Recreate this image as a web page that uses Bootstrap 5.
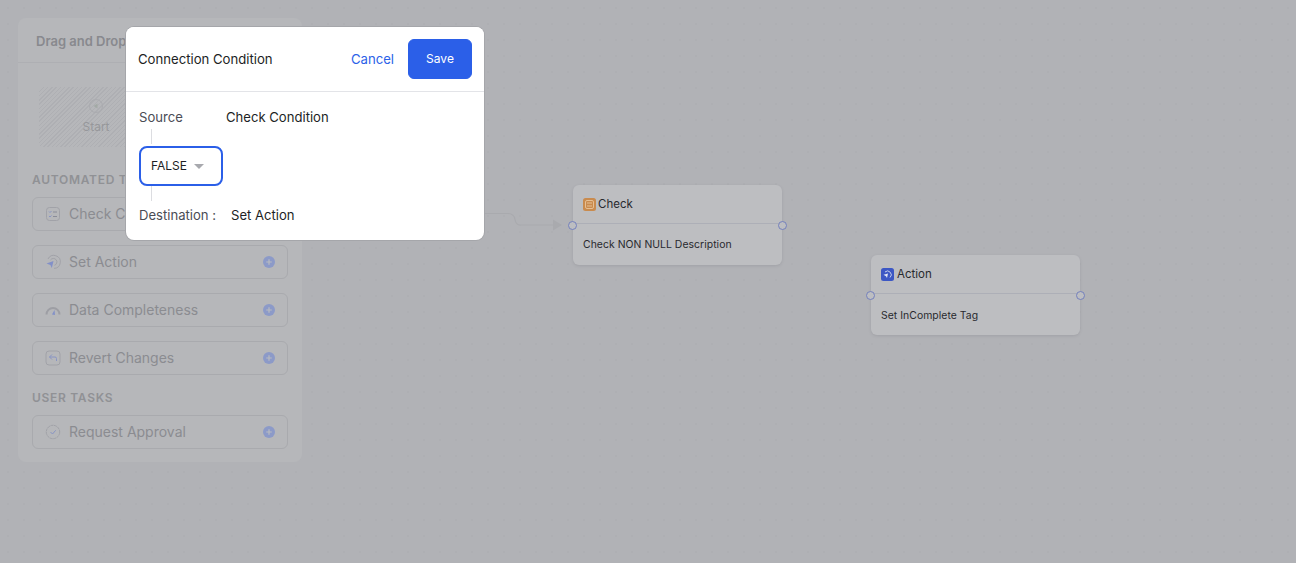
<!DOCTYPE html>
<html lang="en">
<head>
<meta charset="utf-8">
<title>Connection Condition</title>
<link href="https://cdn.jsdelivr.net/npm/bootstrap@5.3.0/dist/css/bootstrap.min.css" rel="stylesheet">
<style>
html,body{height:100%;margin:0}
body{font-family:Inter,"Liberation Sans",sans-serif;overflow:hidden}
.wf-canvas{position:relative;width:1296px;height:563px;background-color:#b1b2b6;background-image:radial-gradient(#aeafb3 1px,transparent 1px);background-size:16px 16px}
.wf-side{position:absolute;left:18px;top:18px;width:284px;height:444px;background:#b6b7ba;border-radius:8px}
.wf-side-head{height:45px;padding:0 18px;border-bottom:1px solid #aeafb3;font-size:13px;font-weight:600;line-height:46px;color:#88898e;white-space:nowrap}
.wf-side-body{padding:24px 14px 0}
.wf-start{width:114px;height:60px;margin-left:7px;border-radius:4px;font-size:12px;color:#96979b;background:repeating-linear-gradient(135deg,#aeafb3 0 1px,#b6b7ba 1px 3px)}
.wf-section{font-size:12px;font-weight:600;letter-spacing:.7px;line-height:16px;color:#909195;white-space:nowrap}
.wf-section-a{margin-top:25px;margin-bottom:9px}
.wf-section-b{margin-top:15px;margin-bottom:9px}
.wf-task{height:34px;border:1px solid #a9aaae;border-radius:6px;padding:0 12px 2px 12px;margin-bottom:14px;font-size:14px;color:#8b8c91}
.wf-task svg.ti{width:16px;height:16px;margin-right:8px;flex:none;margin-top:2px}
.wf-plus{width:12px;height:12px;flex:none;margin-top:2px}
.wf-node{position:absolute;width:209px;height:80px;background:#bdbec1;border-radius:6px;box-shadow:0 1px 3px rgba(90,90,100,.18);color:#28292e}
.wf-check{left:573px;top:185px}
.wf-action{left:871px;top:255px}
.wf-node-head{height:39px;padding:0 10px;border-bottom:1px solid #adafb7;font-size:11.5px;font-weight:400;gap:2px}
.wf-action .wf-node-head{gap:3px}
.wf-node-head span{position:relative;top:.5px}
.wf-node-head svg{width:13px;height:13px}
.wf-node-text{padding:14px 10px 0;font-size:10.4px;font-weight:400;line-height:13px;letter-spacing:.05px}
.wf-action .wf-node-text{padding-top:15px}
.wf-pin{position:absolute;top:36px;width:9px;height:9px;border:1.3px solid #7480bd;border-radius:50%;background:#bdbec1}
.wf-pin-l{left:-5px}
.wf-pin-r{right:-5px}
.wf-edge{position:absolute;left:0;top:0;width:1296px;height:563px}
.wf-dialog{position:absolute;left:126px;top:27px;width:358px;height:213px;border:0;border-radius:8px;box-shadow:0 0 0 1px #a5a6aa}
.wf-dialog .card-header{height:65px;padding:0 12px;background:#fff;border-bottom:1px solid #e3e4e8;border-radius:8px 8px 0 0}
.wf-title{font-size:13.15px;font-weight:400;color:#1d1f25;padding-top:1px}
.wf-cancel{font-size:13.15px;color:#2b62e8;text-decoration:none;margin-right:14px;padding-top:1px}
.wf-save{width:64px;height:40px;padding:0 0 1px;font-size:12px;font-weight:400;border-radius:6px;background:#2b5fe8;border-color:#2b5fe8}
.wf-body{padding:0 13px;font-size:13.1px;line-height:17px;position:relative}
.wf-label{color:#4a4c55}
.wf-value{color:#1d1f25;font-weight:400}
.wf-row1{margin-top:17px}
.wf-row1 .wf-label{width:87px}
.wf-stem{width:1px;height:15px;background:#dcdde1;margin-left:12px}
.wf-stem-top{margin-top:3px;margin-bottom:2px}
.wf-pick{width:84px;height:40px;border:2px solid #2b5fe8;border-radius:8px;padding:0 0 2px 10px;font-size:12px;font-weight:400;color:#1d1f25}
.wf-caret{width:0;height:0;margin-left:7px;margin-top:2px;border-left:5px solid transparent;border-right:5px solid transparent;border-top:5px solid #a8a9ae}
.wf-row2{margin-top:6px}
.wf-row2 .wf-label{margin-right:15px}
</style>
</head>
<body>
<div class="wf-canvas">
  <aside class="wf-side">
    <div class="wf-side-head">Drag and Drop</div>
    <div class="wf-side-body">
      <div class="wf-start d-flex flex-column align-items-center justify-content-center">
        <svg width="16" height="16" viewBox="0 0 16 16" fill="none" class="mb-1"><circle cx="8" cy="8" r="6.500" stroke="#aaabaf"/><path d="M5.500 8l4-2.500v5z" fill="#a3aaa6"/></svg>
        <span>Start</span>
      </div>
      <div class="wf-section wf-section-a">AUTOMATED TASKS</div>
      <div class="wf-task d-flex align-items-center">
        <svg class="ti" viewBox="0 0 16 16" fill="none"><rect x="1.500" y="1.500" width="13" height="13" rx="3" stroke="#a1a2a8"/><path d="M4 5.500l1 1 1.500-1.500M4 10l1 1 1.500-1.500" stroke="#8894c4"/><path d="M8 6h4M8 10.500h4" stroke="#8a8c98"/></svg>
        <span class="flex-grow-1">Check Condition</span>
        <svg class="wf-plus" viewBox="0 0 13 13"><circle cx="6.500" cy="6.500" r="6.500" fill="#8c9ac8"/><path d="M6.500 3.500v6M3.500 6.500h6" stroke="#b9bbc0" stroke-width="1.300"/></svg>
      </div>
      <div class="wf-task d-flex align-items-center">
        <svg class="ti" viewBox="0 0 16 16" fill="none"><path d="M3 5A6.500 6.500 0 1 1 9 14.400" stroke="#a1a2a8"/><path d="M5.500 6A3.500 3.500 0 1 1 9.500 11.300" stroke="#a1a2a8"/><path d="M1.500 9.500L8.500 7 6.800 14 5.400 11z" fill="#8290c8"/></svg>
        <span class="flex-grow-1">Set Action</span>
        <svg class="wf-plus" viewBox="0 0 13 13"><circle cx="6.500" cy="6.500" r="6.500" fill="#8c9ac8"/><path d="M6.500 3.500v6M3.500 6.500h6" stroke="#b9bbc0" stroke-width="1.300"/></svg>
      </div>
      <div class="wf-task d-flex align-items-center">
        <svg class="ti" viewBox="0 0 16 16" fill="none"><path d="M1.500 12.500a6.500 6.500 0 0 1 13 0" stroke="#9d9ea4" stroke-width="2"/><path d="M7 12.500L9.500 8l.5 5z" fill="#8290c8"/></svg>
        <span class="flex-grow-1">Data Completeness</span>
        <svg class="wf-plus" viewBox="0 0 13 13"><circle cx="6.500" cy="6.500" r="6.500" fill="#8c9ac8"/><path d="M6.500 3.500v6M3.500 6.500h6" stroke="#b9bbc0" stroke-width="1.300"/></svg>
      </div>
      <div class="wf-task d-flex align-items-center">
        <svg class="ti" viewBox="0 0 16 16" fill="none"><rect x="1" y="1" width="14" height="14" rx="3" stroke="#a1a2a8"/><path d="M7 4.500L4.500 7 7 9.500M4.500 7H10a1.500 1.500 0 0 1 1.500 1.500V11" stroke="#8894c4"/></svg>
        <span class="flex-grow-1">Revert Changes</span>
        <svg class="wf-plus" viewBox="0 0 13 13"><circle cx="6.500" cy="6.500" r="6.500" fill="#8c9ac8"/><path d="M6.500 3.500v6M3.500 6.500h6" stroke="#b9bbc0" stroke-width="1.300"/></svg>
      </div>
      <div class="wf-section wf-section-b">USER TASKS</div>
      <div class="wf-task d-flex align-items-center">
        <svg class="ti" viewBox="0 0 16 16" fill="none"><circle cx="8" cy="8" r="6.700" stroke="#a1a2a8" stroke-dasharray="3 .6"/><path d="M5.500 8l2 2 3.200-3.700" stroke="#8894c4"/></svg>
        <span class="flex-grow-1">Request Approval</span>
        <svg class="wf-plus" viewBox="0 0 13 13"><circle cx="6.500" cy="6.500" r="6.500" fill="#8c9ac8"/><path d="M6.500 3.500v6M3.500 6.500h6" stroke="#b9bbc0" stroke-width="1.300"/></svg>
      </div>
    </div>
  </aside>

  <svg class="wf-edge" viewBox="0 0 1296 563" fill="none"><path d="M484 213.500h24q6 0 7 6t6 5.500h33" stroke="#a9aaae" stroke-width="1.200"/><path d="M553 219.500l9 5.500-9 5.500z" fill="#a9aaae"/></svg>

  <div class="wf-node wf-check">
    <div class="wf-node-head d-flex align-items-center">
      <svg viewBox="0 0 13 13" fill="none"><rect width="13" height="13" rx="2.500" fill="#c98b4e"/><rect x="2.500" y="2.500" width="8" height="8" rx="1.500" stroke="#e6bf94"/><path d="M4 5h5M4 8h5" stroke="#e6bf94"/></svg>
      <span>Check</span>
    </div>
    <div class="wf-node-text">Check NON NULL Description</div>
    <span class="wf-pin wf-pin-l"></span><span class="wf-pin wf-pin-r"></span>
  </div>

  <div class="wf-node wf-action">
    <div class="wf-node-head d-flex align-items-center">
      <svg viewBox="0 0 13 13" fill="none"><rect width="13" height="13" rx="2.500" fill="#3c57c4"/><path d="M4 4a3.700 3.700 0 1 1 5 5.500" stroke="#c4cdea"/><path d="M2.500 6.800L7 5.500 6 10l-1-1.800z" fill="#e3e7f5"/></svg>
      <span>Action</span>
    </div>
    <div class="wf-node-text">Set InComplete Tag</div>
    <span class="wf-pin wf-pin-l"></span><span class="wf-pin wf-pin-r"></span>
  </div>

  <div class="card wf-dialog">
    <div class="card-header d-flex align-items-center">
      <span class="wf-title flex-grow-1">Connection Condition</span>
      <a href="#" class="wf-cancel">Cancel</a>
      <button type="button" class="btn btn-primary wf-save">Save</button>
    </div>
    <div class="wf-body">
      <div class="wf-row1 d-flex"><span class="wf-label">Source</span><span class="wf-value">Check Condition</span></div>
      <div class="wf-stem wf-stem-top"></div>
      <div class="wf-pick d-flex align-items-center"><span>FALSE</span><span class="wf-caret"></span></div>
      <div class="wf-stem"></div>
      <div class="wf-row2 d-flex"><span class="wf-label">Destination :</span><span class="wf-value">Set Action</span></div>
    </div>
  </div>
</div>
<script src="https://cdn.jsdelivr.net/npm/bootstrap@5.3.0/dist/js/bootstrap.bundle.min.js"></script>
</body>
</html>
